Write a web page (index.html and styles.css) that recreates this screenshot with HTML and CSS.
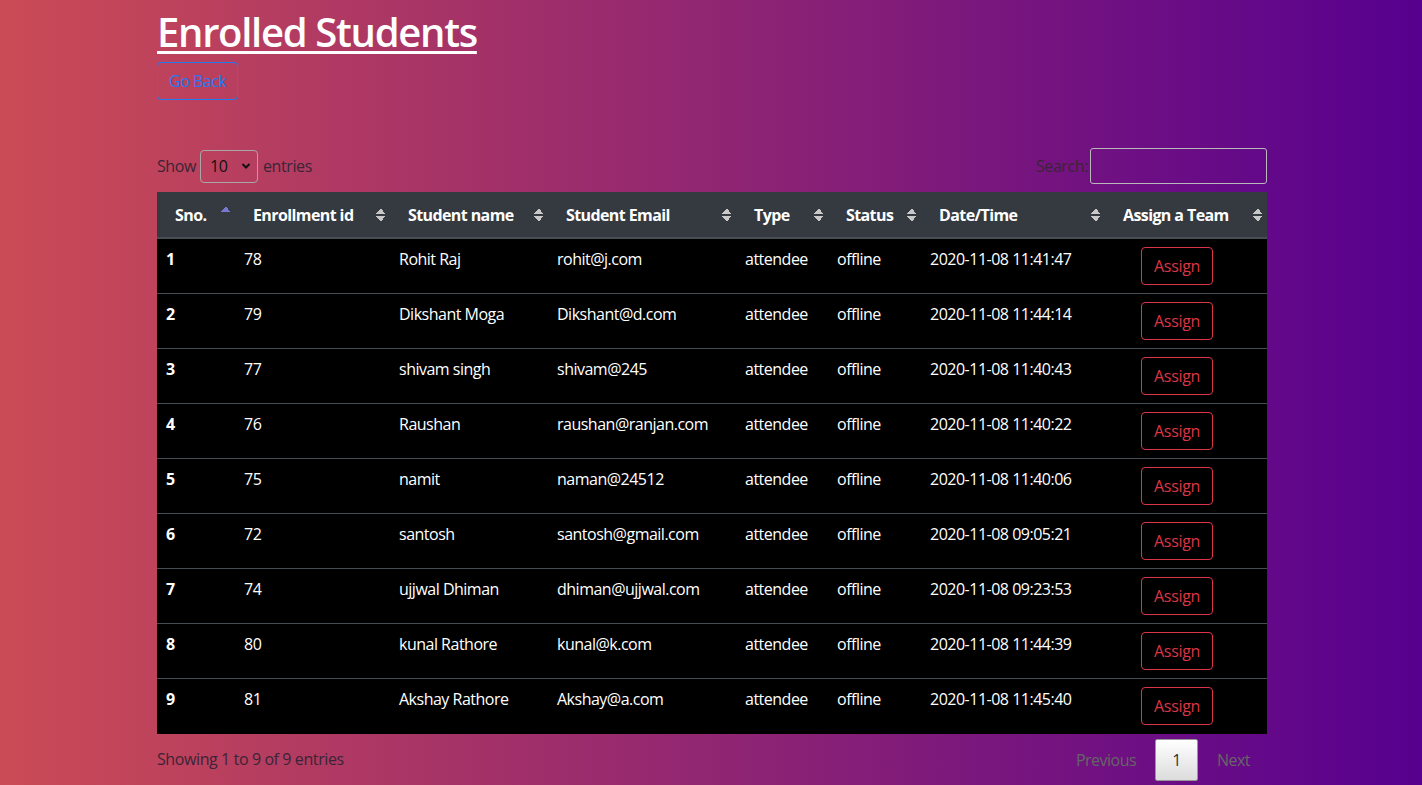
FILE: index.html
```html
<!DOCTYPE html>
<html lang="en">
<head>
<meta charset="utf-8">
<title>Enrolled Students</title>
<link rel="stylesheet" href="styles.css">
</head>
<body>
<div class="container">
  <h1 class="title">Enrolled Students</h1>
  <a class="btn btn-outline-primary" href="#">Go Back</a>

  <div class="dt-wrapper">
    <div class="dt-top">
      <label class="dt-length">Show
        <span class="select">10
          <svg width="10" height="8" viewBox="0 0 10 8"><path d="M1.5 2 L5 5.5 L8.5 2" fill="none" stroke="#111" stroke-width="2"/></svg>
        </span>
        entries</label>
      <label class="dt-filter">Search: <span class="search-input"></span></label>
    </div>

    <table class="dt-table">
      <colgroup>
        <col class="c1"><col class="c2"><col class="c3"><col class="c4"><col class="c5"><col class="c6"><col class="c7"><col class="c8">
      </colgroup>
      <thead>
        <tr>
          <th class="sort-asc">Sno.</th>
          <th class="sort">Enrollment id</th>
          <th class="sort">Student name</th>
          <th class="sort">Student Email</th>
          <th class="sort">Type</th>
          <th class="sort">Status</th>
          <th class="sort">Date/Time</th>
          <th class="sort">Assign a Team</th>
        </tr>
      </thead>
      <tbody>
        <tr><td class="sno">1</td><td>78</td><td>Rohit Raj</td><td>rohit@j.com</td><td>attendee</td><td>offline</td><td>2020-11-08 11:41:47</td><td class="act"><a class="btn btn-outline-danger" href="#">Assign</a></td></tr>
        <tr><td class="sno">2</td><td>79</td><td>Dikshant Moga</td><td>Dikshant@d.com</td><td>attendee</td><td>offline</td><td>2020-11-08 11:44:14</td><td class="act"><a class="btn btn-outline-danger" href="#">Assign</a></td></tr>
        <tr><td class="sno">3</td><td>77</td><td>shivam singh</td><td>shivam@245</td><td>attendee</td><td>offline</td><td>2020-11-08 11:40:43</td><td class="act"><a class="btn btn-outline-danger" href="#">Assign</a></td></tr>
        <tr><td class="sno">4</td><td>76</td><td>Raushan</td><td>raushan@ranjan.com</td><td>attendee</td><td>offline</td><td>2020-11-08 11:40:22</td><td class="act"><a class="btn btn-outline-danger" href="#">Assign</a></td></tr>
        <tr><td class="sno">5</td><td>75</td><td>namit</td><td>naman@24512</td><td>attendee</td><td>offline</td><td>2020-11-08 11:40:06</td><td class="act"><a class="btn btn-outline-danger" href="#">Assign</a></td></tr>
        <tr><td class="sno">6</td><td>72</td><td>santosh</td><td>santosh@gmail.com</td><td>attendee</td><td>offline</td><td>2020-11-08 09:05:21</td><td class="act"><a class="btn btn-outline-danger" href="#">Assign</a></td></tr>
        <tr><td class="sno">7</td><td>74</td><td>ujjwal Dhiman</td><td>dhiman@ujjwal.com</td><td>attendee</td><td>offline</td><td>2020-11-08 09:23:53</td><td class="act"><a class="btn btn-outline-danger" href="#">Assign</a></td></tr>
        <tr><td class="sno">8</td><td>80</td><td>kunal Rathore</td><td>kunal@k.com</td><td>attendee</td><td>offline</td><td>2020-11-08 11:44:39</td><td class="act"><a class="btn btn-outline-danger" href="#">Assign</a></td></tr>
        <tr><td class="sno">9</td><td>81</td><td>Akshay Rathore</td><td>Akshay@a.com</td><td>attendee</td><td>offline</td><td>2020-11-08 11:45:40</td><td class="act"><a class="btn btn-outline-danger" href="#">Assign</a></td></tr>
      </tbody>
    </table>

    <div class="dt-bottom">
      <div class="dt-info">Showing 1 to 9 of 9 entries</div>
      <div class="dt-paginate">
        <span class="page-btn disabled">Previous</span>
        <span class="page-btn current">1</span>
        <span class="page-btn disabled">Next</span>
      </div>
    </div>
  </div>
</div>
</body>
</html>
```
FILE: styles.css
```css
* { box-sizing: border-box; }
html, body { height: 100%; }
body {
  margin: 0;
  font-family: "Open Sans", "Noto Sans", sans-serif;
  font-size: 16px;
  line-height: 1.5;
  color: #212529;
  background: linear-gradient(to right, #cb4b55, #56008f);
  min-height: 785px;
}
.container {
  width: 1140px;
  padding: 0 14px 0 16px;
  margin: 0 auto;
}
.title {
  margin: 0;
  padding-top: 7px;
  font-size: 40px;
  font-weight: 600;
  line-height: 50px;
  color: #fff;
  text-decoration: underline;
  text-decoration-thickness: 3px;
  text-underline-offset: 4px;
  letter-spacing: -1.3px;
}
.btn {
  display: inline-block;
  padding: 6px 12px;
  font-size: 16px;
  line-height: 24px;
  border: 1px solid transparent;
  border-radius: 4px;
  text-decoration: none;
  letter-spacing: -0.3px;
}
.btn-outline-primary {
  color: #1e7bf5;
  border-color: #1e7bf5;
  margin-top: 5px;
  padding: 6px 11px;
  letter-spacing: -0.5px;
}
.btn-outline-danger {
  color: #dc3545;
  border-color: #dc3545;
}
.dt-wrapper { margin-top: 48px; }
.dt-top {
  display: flex;
  justify-content: space-between;
  align-items: center;
  height: 36px;
  margin-bottom: 8px;
  color: #3b2436;
  letter-spacing: -0.4px;
}
.dt-length { display: flex; align-items: center; gap: 4px; }
.select {
  display: inline-flex;
  align-items: center;
  justify-content: space-between;
  width: 58px;
  height: 33px;
  padding: 0 6px 0 9px;
  border: 1px solid #a7a7a7;
  border-radius: 4px;
  color: #111;
  margin: 0 1px 0 0;
}
.dt-filter { display: flex; align-items: center; gap: 2px; }
.search-input {
  display: inline-block;
  width: 177px;
  height: 36px;
  border: 1px solid #b9b9b9;
  border-radius: 3px;
}
.dt-table {
  width: 1110px;
  table-layout: fixed;
  border-collapse: collapse;
  color: #fff;
  background: #000;
  letter-spacing: -0.5px;
}
.c1 { width: 78px; } .c2 { width: 155px; } .c3 { width: 158px; } .c4 { width: 188px; }
.c5 { width: 92px; } .c6 { width: 93px; } .c7 { width: 184px; } .c8 { width: 162px; }
.dt-table thead th {
  position: relative;
  background: #343a40;
  text-align: left;
  font-weight: 700;
  padding: 10px 18px 10px 18px;
  height: 46px;
  border-bottom: 2px solid #454d55;
  white-space: nowrap;
  letter-spacing: -0.6px;
}
.dt-table th.sort::after,
.dt-table th.sort-asc::after {
  content: "";
  position: absolute;
  right: 5px;
  top: 16px;
  width: 9px;
  height: 14px;
}
.dt-table th.sort::after {
  background:
    linear-gradient(to bottom right, transparent 50%, #c8c8c8 50%) left top / 5px 6px no-repeat,
    linear-gradient(to bottom left, transparent 50%, #c8c8c8 50%) right top / 4px 6px no-repeat,
    linear-gradient(to top right, transparent 50%, #c8c8c8 50%) left bottom / 5px 6px no-repeat,
    linear-gradient(to top left, transparent 50%, #c8c8c8 50%) right bottom / 4px 6px no-repeat;
}
.dt-table th.sort-asc::after {
  right: 5px;
  top: 14px;
  height: 6px;
  background:
    linear-gradient(to bottom right, transparent 50%, #7777d4 50%) left top / 5px 6px no-repeat,
    linear-gradient(to bottom left, transparent 50%, #7777d4 50%) right top / 4px 6px no-repeat;
}
.dt-table tbody td {
  padding: 8px 9px;
  height: 55px;
  vertical-align: top;
  border-top: 1px solid #454d55;
  white-space: nowrap;
}
.dt-table tbody tr:first-child td { border-top: none; }
.dt-table td.sno { font-weight: 700; }
.dt-table td.act { padding: 8px 10px 8px 36px; letter-spacing: -0.3px; }
.dt-bottom {
  display: flex;
  justify-content: space-between;
  align-items: flex-start;
  letter-spacing: -0.4px;
}
.dt-info {
  padding-top: 13px;
  color: #3b2436;
}
.dt-paginate {
  display: flex;
  align-items: center;
  padding-top: 5px;
  margin-right: -2px;
}
.page-btn {
  display: inline-block;
  padding: 8px 18px;
  margin-left: 0;
  line-height: 24px;
  border: 1px solid transparent;
  border-radius: 2px;
}
.page-btn.disabled { color: #666; letter-spacing: -0.5px; }
.page-btn.current {
  color: #333;
  border-color: #979797;
  background: linear-gradient(to bottom, #fff 0%, #dcdcdc 100%);
  padding: 8px 16px;
}
```
